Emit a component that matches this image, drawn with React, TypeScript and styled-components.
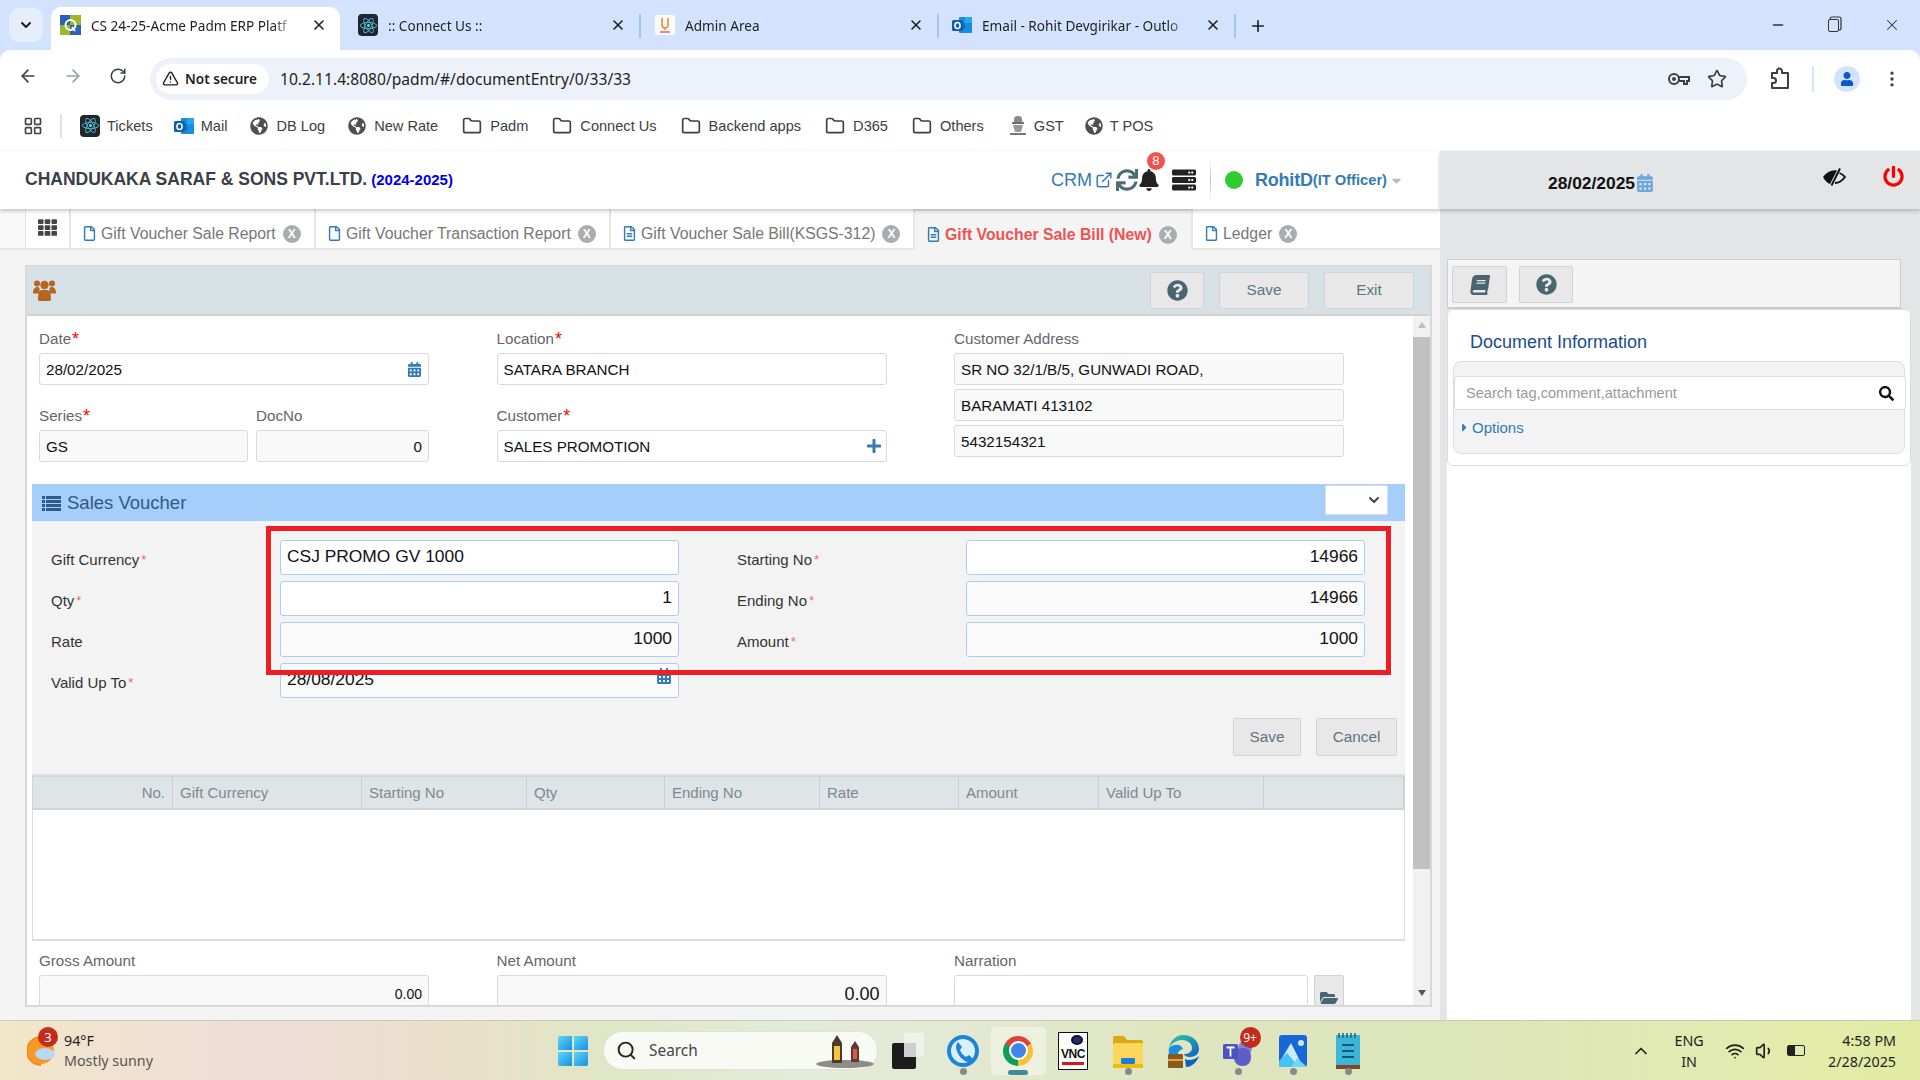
import styled, { createGlobalStyle } from "styled-components";
import {
  ArrowLeft,
  ArrowRight,
  ChevronDown,
  ChevronUp,
  ExternalLink,
  Folder,
  LayoutGrid,
  Minus,
  MoreVertical,
  Plus,
  RotateCw,
  Search,
  Star,
  TriangleAlert,
  Volume1,
  Wifi,
  X,
} from "lucide-react";
import {
  FaBell,
  FaBook,
  FaCalendarAlt,
  FaCaretDown,
  FaCaretRight,
  FaFolderOpen,
  FaGlobeAmericas,
  FaPlus,
  FaPowerOff,
  FaQuestionCircle,
  FaReact,
  FaRegFile,
  FaRegFileAlt,
  FaSearch,
  FaServer,
  FaSync,
  FaTh,
  FaUser,
} from "react-icons/fa";

const GlobalStyle = createGlobalStyle`
  html, body {
    margin: 0;
    padding: 0;
    background: #fff;
  }
  * {
    box-sizing: border-box;
  }
`;

const UI_FONT = `"Noto Sans", "Open Sans", sans-serif`;
const APP_FONT = `"Liberation Sans", Arial, sans-serif`;

const Page = styled.div`
  width: 1920px;
  height: 1080px;
  overflow: hidden;
  display: flex;
  flex-direction: column;
  font-family: ${APP_FONT};
  background: #fff;
`;

/* browser chrome */
const ChromeFrame = styled.div`
  background: #d3e3fd;
  font-family: ${UI_FONT};
  flex: none;
`;

const TabRow = styled.div`
  height: 50px;
  padding-left: 9px;
  display: flex;
  align-items: flex-end;
  color: #1f1f1f;
`;

const TabListButton = styled.div`
  width: 34px;
  height: 34px;
  margin: 0 8px 8px 0;
  border-radius: 10px;
  background: #e6eefc;
  display: flex;
  align-items: center;
  justify-content: center;
`;

const BrowserTab = styled.div<{ $active?: boolean; $width: number; $pad: number }>`
  position: relative;
  width: ${(p) => p.$width}px;
  height: 43px;
  padding: 0 0 7px ${(p) => p.$pad}px;
  display: flex;
  align-items: center;
  flex: none;
  background: ${(p) => (p.$active ? "#fff" : "transparent")};
  border-radius: 10px 10px 0 0;
  font-size: 13.6px;
`;

const TabDivider = styled.span`
  width: 2px;
  height: 24px;
  margin-bottom: 12px;
  background: #a8c2ea;
  flex: none;
`;

const TabTitle = styled.span`
  flex: 1;
  min-width: 0;
  margin-left: 10px;
  white-space: nowrap;
  mask-image: linear-gradient(90deg, #000 88%, transparent);
`;

const TabClose = styled.span`
  width: 42px;
  flex: none;
  display: flex;
  justify-content: center;
`;

const NewTab = styled.span`
  margin: 0 0 15px 13px;
  display: flex;
`;

const WindowControls = styled.div`
  margin-left: auto;
  height: 50px;
  display: flex;
  align-items: center;
`;

const WindowButton = styled.span`
  width: 57px;
  display: flex;
  justify-content: center;
  color: #333;
`;

const RestoreIcon = styled.span`
  width: 11px;
  height: 13px;
  margin-right: 3px;
  border: 1.4px solid #333;
  border-radius: 2px;
  box-shadow: 2px -2px 0 -0.6px #d3e3fd, 2px -2px 0 0.6px #333;
`;

const Toolbar = styled.div`
  height: 52px;
  padding-left: 5px;
  background: #fff;
  border-radius: 10px 10px 0 0;
  display: flex;
  align-items: center;
`;

const NavButton = styled.span<{ $muted?: boolean }>`
  width: 45px;
  display: flex;
  justify-content: center;
  color: ${(p) => (p.$muted ? "#9aa0a6" : "#3c4043")};
`;

const Omnibox = styled.div`
  width: 1597px;
  height: 42px;
  margin-left: 10px;
  margin-bottom: -6px;
  padding: 0 20px 0 6px;
  border-radius: 21px;
  background: #ecf1fa;
  display: flex;
  align-items: center;
`;

const SecurityChip = styled.div`
  width: 113px;
  height: 30px;
  border-radius: 15px;
  background: #fff;
  padding: 0 0 2px 6px;
  display: flex;
  align-items: center;
  gap: 6px;
  font-size: 13.6px;
  font-weight: 600;
  color: #1f1f1f;
  white-space: nowrap;
`;

const UrlText = styled.span`
  margin-left: 11px;
  font-size: 15.6px;
  color: #1f1f1f;
`;

const OmniIcons = styled.div`
  margin-left: auto;
  display: flex;
  align-items: center;
  gap: 16px;
  color: #3c4043;
`;

const ProfileArea = styled.div`
  flex: 1;
  height: 42px;
  margin-bottom: -6px;
  padding-left: 22px;
  display: flex;
  align-items: center;
  color: #3c4043;
`;

const ToolbarDivider = styled.span`
  width: 2px;
  height: 26px;
  margin: 0 20px 0 21px;
  background: #d3e3fd;
`;

const Avatar = styled.span`
  width: 26px;
  height: 26px;
  border-radius: 50%;
  background: #d3e3fd;
  color: #0b57d0;
  display: flex;
  align-items: center;
  justify-content: center;
`;

const ProfileMenu = styled.span`
  margin-left: 22px;
  display: flex;
`;

const BookmarkBar = styled.div`
  height: 49px;
  padding: 0 0 2px 23px;
  background: #fff;
  display: flex;
  align-items: center;
  gap: 21px;
  font-size: 14.6px;
  color: #3c4043;
`;

const AppsButton = styled.span`
  display: flex;
  color: #444;
`;

const BookmarkDivider = styled.span`
  width: 2px;
  height: 24px;
  margin: 0 -3px 0 -4px;
  background: #d3e3fd;
`;

const Bookmark = styled.span<{ $indent?: number; $gap?: number }>`
  margin-left: ${(p) => p.$indent ?? 0}px;
  display: flex;
  align-items: center;
  gap: ${(p) => p.$gap ?? 7}px;
  white-space: nowrap;
`;

const GlobeIcon = styled(FaGlobeAmericas)`
  color: #4f4f4f;
  font-size: 18px;
`;

const ReactTile = styled.span<{ $size: number }>`
  width: ${(p) => p.$size}px;
  height: ${(p) => p.$size + 2}px;
  border-radius: 4px;
  background: #20262b;
  color: #5ed3ee;
  display: flex;
  align-items: center;
  justify-content: center;
  flex: none;
  font-size: ${(p) => p.$size - 3}px;
`;

/* application */
const AppArea = styled.div`
  flex: 1;
  display: flex;
  min-height: 0;
`;

const MainColumn = styled.div`
  width: 1440px;
  display: flex;
  flex-direction: column;
`;

const AppHeader = styled.header`
  position: relative;
  z-index: 2;
  height: 58px;
  padding: 0 36px 0 25px;
  background: #fff;
  box-shadow: 0 2px 4px rgba(0, 0, 0, 0.22);
  display: flex;
  align-items: center;
`;

const CompanyName = styled.span`
  margin-top: -2px;
  font-size: 17.5px;
  font-weight: 700;
  color: #3a4048;
`;

const FiscalYear = styled.span`
  margin: -2px 0 0 4px;
  font-size: 15px;
  font-weight: 700;
  color: #0000ee;
`;

const HeaderTools = styled.div`
  margin-left: auto;
  display: flex;
  align-items: center;
  color: #337ab7;
`;

const CrmLink = styled.span`
  font-size: 18px;
  display: flex;
  align-items: center;
  gap: 3px;
`;

const SyncIcon = styled(FaSync)`
  margin-left: 3px;
  font-size: 22px;
  color: #4b6c75;
`;

const BellWrap = styled.span`
  position: relative;
  display: flex;
  margin: 0 12px 0 0;
  color: #222;
  font-size: 22px;
`;

const CountBadge = styled.span<{ $bg: string }>`
  position: absolute;
  top: -17px;
  right: -5px;
  min-width: 18px;
  height: 18px;
  border-radius: 9px;
  background: ${(p) => p.$bg};
  color: #fff;
  font-size: 13px;
  line-height: 18px;
  text-align: center;
`;

const MenuIcon = styled(FaServer)`
  color: #222;
  font-size: 24px;
`;

const HeaderDivider = styled.span`
  width: 1px;
  height: 40px;
  margin: 0 14px;
  background: linear-gradient(#fff, #bbb 50%, #fff);
`;

const StatusDot = styled.span`
  width: 18px;
  height: 18px;
  border-radius: 50%;
  background: #2ecc2e;
`;

const UserName = styled.span`
  margin-left: 12px;
  font-size: 18px;
  font-weight: 700;
  color: #337ab7;
  letter-spacing: -0.2px;
`;

const UserRole = styled.span`
  font-size: 14.7px;
  font-weight: 700;
  color: #337ab7;
`;

const RoleCaret = styled(FaCaretDown)`
  margin-left: 2px;
  color: #bbb;
  font-size: 15px;
`;

const DocTabs = styled.nav`
  height: 41px;
  padding-left: 25px;
  background: linear-gradient(90deg, #f8f8f8 25px, #fff 25px);
  border-bottom: 2px solid #e6e6e6;
  display: flex;
  font-size: 15.8px;
  color: #777;
`;

const AppsCell = styled.span`
  width: 44px;
  border-left: 1px solid #e6e6e6;
  padding: 9px 0 0 12px;
  color: #444;
  font-size: 19px;
  display: flex;
`;

const DocTab = styled.span<{ $active?: boolean; $width: number }>`
  width: ${(p) => p.$width}px;
  margin-bottom: ${(p) => (p.$active ? "-2px" : "0")};
  padding: ${(p) => (p.$active ? "8px" : "10px")} 0 0 11px;
  border-left: 2px solid #e6e6e6;
  border-top: ${(p) => (p.$active ? "2px solid #e6e6e6" : "none")};
  background: ${(p) => (p.$active ? "#f4f4f4" : "#fff")};
  color: ${(p) => (p.$active ? "#f05252" : "#777")};
  font-weight: ${(p) => (p.$active ? 700 : 400)};
  display: flex;
  align-items: center;
  gap: 4px;
  white-space: nowrap;
  flex: none;
`;

const DocIcon = styled.span`
  display: flex;
  color: #337ab7;
  font-size: 15px;
`;

const DocClose = styled.span`
  width: 18px;
  height: 18px;
  margin-left: 3px;
  border-radius: 50%;
  background: #a9adad;
  color: #fff;
  font-size: 12px;
  font-weight: 700;
  line-height: 18px;
  text-align: center;
`;

const Content = styled.main`
  flex: 1;
  min-height: 0;
  padding: 15px 8px 13px 25px;
  background: #f4f4f4;
`;

const Panel = styled.section`
  height: 100%;
  border: 2px solid #d8d8d8;
  border-top-width: 1px;
  background: #fff;
  display: flex;
  flex-direction: column;
  overflow: hidden;
`;

const PanelBar = styled.div`
  height: 50px;
  padding: 0 16px 0 6px;
  background: #d6e0e5;
  border-bottom: 2px solid #cfd4c8;
  display: flex;
  align-items: center;
  gap: 15px;
  flex: none;
`;

const BarTitleIcon = styled.svg`
  margin-right: auto;
`;

const GreyButton = styled.span<{ $width: number; $height?: number }>`
  width: ${(p) => p.$width}px;
  height: ${(p) => p.$height ?? 37}px;
  border: 1px solid #d2d2d2;
  border-radius: 2px;
  background: #e8e8e8;
  color: #5f7480;
  font-size: 15.3px;
  display: flex;
  align-items: center;
  justify-content: center;
  flex: none;
`;

const HelpIcon = styled(FaQuestionCircle)`
  color: #4a6572;
  font-size: 21px;
`;

const PanelBody = styled.div`
  flex: 1;
  min-height: 0;
  display: flex;
`;

const ScrollArea = styled.div`
  flex: 1;
  min-width: 0;
  overflow: hidden;
`;

const FieldGrid = styled.div<{ $height?: number; $top?: number }>`
  height: ${(p) => (p.$height ? `${p.$height}px` : "auto")};
  padding: ${(p) => p.$top ?? 0}px 0 0 12px;
  display: grid;
  grid-template-columns: 390px 390px 390px;
  column-gap: 67.5px;
`;

const FieldColumn = styled.div`
  display: flex;
  flex-direction: column;
`;

const FieldLabel = styled.label`
  height: 24px;
  padding-bottom: 5px;
  display: flex;
  align-items: center;
  font-size: 15.2px;
  color: #666;
`;

const Required = styled.sup`
  margin-left: 1px;
  color: #f00;
  font-size: 18px;
  line-height: 10px;
`;

const TextBox = styled.div<{ $readOnly?: boolean; $right?: boolean; $height?: number }>`
  height: ${(p) => p.$height ?? 32}px;
  padding: 0 6px;
  border: 1px solid #d9d9d9;
  border-radius: 3px;
  background: ${(p) => (p.$readOnly ? "#f9f9f9" : "#fff")};
  color: #111;
  font-size: 15.2px;
  display: flex;
  align-items: center;
  justify-content: ${(p) => (p.$right ? "flex-end" : "space-between")};
  white-space: nowrap;
`;

const FieldPair = styled.div`
  display: grid;
  grid-template-columns: 209px 173px;
  column-gap: 8px;
`;

const AddressStack = styled.div`
  display: flex;
  flex-direction: column;
  gap: 4px;
`;

const SpacedColumn = styled(FieldColumn)`
  gap: 21px;
`;

const CalendarIcon = styled(FaCalendarAlt)`
  color: #337ab7;
  font-size: 15px;
`;

const ValidCalendar = styled(CalendarIcon)`
  margin-top: -7px;
  font-size: 16px;
`;

const PlusIcon = styled(FaPlus)`
  margin-right: -2px;
  color: #337ab7;
  font-size: 16px;
`;

const SectionBar = styled.div`
  height: 37px;
  margin: 0 8px 0 5px;
  padding: 1px 10px 0;
  background: #a5cefb;
  color: #2c5b8a;
  display: flex;
  align-items: center;
  gap: 6px;
  font-size: 18.5px;
`;

const SectionSelect = styled.span`
  width: 63px;
  height: 30px;
  margin: -6px 7px 0 auto;
  background: #fff;
  border: 1px solid #dde;
  border-radius: 2px;
  padding-right: 5px;
  color: #444;
  display: flex;
  align-items: center;
  justify-content: flex-end;
`;

const VoucherSection = styled.div`
  position: relative;
  height: 255px;
  margin: 0 8px 0 5px;
  padding: 19px 8px 0 19px;
  background: #f3f3f3;
  border-bottom: 2px solid #e0e0e0;
`;

const VoucherGrid = styled.div`
  display: grid;
  grid-template-columns: 229px 399px 229px 399px;
  grid-auto-rows: 35px;
  row-gap: 6px;
  column-gap: 0;
`;

const VoucherLabel = styled.span<{ $second?: boolean }>`
  margin-left: ${(p) => (p.$second ? "58px" : "0")};
  margin-right: ${(p) => (p.$second ? "-58px" : "0")};
  padding-top: 4px;
  display: flex;
  align-items: center;
  font-size: 15px;
  color: #333;
`;

const RedStar = styled.span`
  margin-left: 2px;
  color: #f06a6a;
  font-size: 13px;
`;

const VoucherBox = styled.div<{ $readOnly?: boolean; $right?: boolean }>`
  padding: 0 6px 3px;
  border: 1.5px solid #a9cdf7;
  border-radius: 3px;
  background: ${(p) => (p.$readOnly ? "#fafafa" : "#fff")};
  color: #111;
  font-size: 17.4px;
  display: flex;
  align-items: center;
  justify-content: ${(p) => (p.$right ? "flex-end" : "space-between")};
`;

const VoucherSecond = styled(VoucherBox)`
  margin-left: 58px;
  margin-right: -58px;
`;

const VoucherSpacer = styled.span`
  grid-column: span 2;
`;

const VoucherActions = styled.div`
  margin-top: 20px;
  display: flex;
  justify-content: flex-end;
  gap: 15px;
`;

const Highlight = styled.div`
  position: absolute;
  top: 5px;
  left: 234px;
  width: 1125px;
  height: 149px;
  border: 5px solid #ee1c25;
  pointer-events: none;
`;

const TableHead = styled.div`
  height: 34px;
  margin: 0 8px 0 5px;
  display: grid;
  grid-template-columns: 140px 189px 165px 138px 155px 139px 140px 165px 1fr;
  background: #dfe4e6;
  border: 1px solid #cfd4d6;
  border-bottom-width: 2px;
  font-size: 15px;
  color: #7a8a92;
`;

const HeadCell = styled.span<{ $right?: boolean }>`
  padding: 0 7px;
  border-right: 1px solid #c9cfd2;
  display: flex;
  align-items: center;
  justify-content: ${(p) => (p.$right ? "flex-end" : "flex-start")};
`;

const TableBody = styled.div`
  height: 131px;
  margin: 0 8px 10px 5px;
  border: 1px solid #ddd;
  border-top: none;
  border-bottom-width: 2px;
`;

const NarrationRow = styled.div`
  display: flex;
  gap: 6px;
`;

const NarrationBox = styled(TextBox)`
  width: 355px;
`;

const UploadButton = styled(GreyButton)`
  padding-top: 14px;
  font-size: 18px;
  color: #4a6572;
`;

const SmallAmount = styled.span`
  font-size: 14px;
  padding-top: 6px;
`;

const LargeAmount = styled.span`
  font-size: 18px;
  padding-top: 6px;
`;

const Scrollbar = styled.div`
  width: 17px;
  flex: none;
  background: #f1f1f1;
  display: flex;
  flex-direction: column;
  align-items: center;
  padding: 6px 0 9px;
`;

const ScrollArrow = styled.span<{ $down?: boolean }>`
  width: 0;
  height: 0;
  border-left: 4.5px solid transparent;
  border-right: 4.5px solid transparent;
  border-bottom: ${(p) => (p.$down ? "none" : "6px solid #bbb")};
  border-top: ${(p) => (p.$down ? "6px solid #555" : "none")};
  flex: none;
`;

const ScrollThumb = styled.span`
  width: 100%;
  height: 532px;
  margin: 9px 0 auto;
  background: #c1c1c1;
`;

/* right side */
const SideColumn = styled.aside`
  width: 480px;
  background: #e4e5e7;
  display: flex;
  flex-direction: column;
`;

const DateBar = styled.div`
  position: relative;
  z-index: 2;
  height: 58px;
  padding: 0 16px 0 108px;
  background: #e4e5e7;
  box-shadow: 0 2px 4px rgba(0, 0, 0, 0.22);
  display: flex;
  align-items: center;
`;

const DateValue = styled.span`
  margin-top: 6px;
  font-size: 17.4px;
  font-weight: 700;
  color: #111;
  display: flex;
  align-items: center;
  gap: 1px;
`;

const DateCalendar = styled(FaCalendarAlt)`
  color: #6ea6d8;
  font-size: 18px;
`;

const EyeGlyph = styled.svg`
  margin: -6px 37px 0 auto;
`;

const PowerIcon = styled(FaPowerOff)`
  margin-top: -8px;
  font-size: 21px;
  color: #f00;
`;

const SideBody = styled.div`
  flex: 1;
  min-height: 0;
  padding: 50px 9px 0 7px;
  display: flex;
  flex-direction: column;
`;

const SideBar = styled.div`
  width: 454px;
  height: 50px;
  padding: 6px 4px;
  border: 1px solid #ccc;
  border-bottom-width: 2px;
  background: #f4f4f4;
  display: flex;
  gap: 12px;
  flex: none;
`;

const BookIcon = styled(FaBook)`
  color: #4a6572;
  font-size: 20px;
  transform: skewX(-8deg);
`;

const InfoPanel = styled.div`
  flex: 1;
  background: #fff;
  border-radius: 6px 6px 0 0;
`;

const InfoCard = styled.div`
  height: 157px;
  padding: 0 5px;
  border: 1px solid #dcdcdc;
  border-radius: 6px;
`;

const InfoTitle = styled.h2`
  height: 51px;
  margin: 0;
  padding: 13px 0 0 17px;
  display: flex;
  align-items: center;
  font-size: 18px;
  font-weight: 400;
  color: #1b4b91;
`;

const InnerCard = styled.div`
  height: 93px;
  padding-top: 14px;
  background: #f3f3f3;
  border: 1px solid #ddd;
  border-radius: 8px;
`;

const SearchBox = styled.div`
  height: 34px;
  margin-right: -2px;
  padding: 0 11px 0 11px;
  background: #fff;
  border: 1px solid #ddd;
  border-radius: 4px;
  display: flex;
  align-items: center;
  justify-content: space-between;
  font-size: 14.6px;
  color: #999;
`;

const SearchGlyph = styled(FaSearch)`
  color: #111;
  font-size: 15px;
`;

const OptionsRow = styled.div`
  margin: 9px 0 0 4px;
  display: flex;
  align-items: center;
  gap: 1px;
  color: #337ab7;
  font-size: 15px;
`;

/* windows taskbar */
const Taskbar = styled.footer`
  height: 60px;
  flex: none;
  display: flex;
  align-items: center;
  font-family: ${UI_FONT};
  border-top: 1px solid #c9c9b8;
  background: linear-gradient(
    90deg,
    #f1e7c9 0,
    #efdcd8 14%,
    #e9e0c8 24%,
    #dfe7c6 32%,
    #e3ecd9 42%,
    #e3e9d2 50%,
    #dfe6c0 60%,
    #dde5bb 75%,
    #e2ebb0 90%,
    #e2eba2 100%
  );
`;

const WeatherArea = styled.div`
  width: 558px;
  padding-left: 27px;
  display: flex;
  align-items: center;
  gap: 9px;
  flex: none;
`;

const WeatherGlyph = styled.span`
  position: relative;
  width: 28px;
  height: 30px;
  display: flex;
`;

const WeatherBadge = styled.span`
  position: absolute;
  top: -9px;
  right: -3px;
  width: 20px;
  height: 20px;
  border-radius: 50%;
  background: #c42b1c;
  color: #fff;
  font-size: 13px;
  line-height: 20px;
  text-align: center;
`;

const WeatherText = styled.div`
  font-size: 14.3px;
  line-height: 20px;
  color: #1f1f1f;
`;

const WeatherNote = styled.div`
  color: #555;
`;

const SearchPill = styled.div`
  width: 275px;
  height: 39px;
  margin-left: 15px;
  padding: 0 2px 0 12px;
  border-radius: 20px;
  background: #fafaf4;
  border: 1px solid #dfe2d8;
  display: flex;
  align-items: center;
  gap: 12px;
  font-size: 15.4px;
  color: #444;
  flex: none;
`;

const PillArt = styled.svg`
  margin-left: auto;
`;

const TaskSlots = styled.div`
  margin-left: 2.5px;
  display: flex;
`;

const TaskSlot = styled.div<{ $active?: boolean; $open?: boolean }>`
  position: relative;
  width: 55px;
  height: 48px;
  display: flex;
  align-items: center;
  justify-content: center;
  border-radius: 5px;
  background: ${(p) => (p.$active ? "#eef1e0" : "transparent")};

  &::after {
    content: "";
    display: ${(p) => (p.$open || p.$active ? "block" : "none")};
    position: absolute;
    bottom: 0;
    left: 50%;
    width: ${(p) => (p.$active ? "20px" : "7px")};
    height: ${(p) => (p.$active ? "5px" : "7px")};
    margin-left: ${(p) => (p.$active ? "-10px" : "-3.5px")};
    border-radius: 4px;
    background: ${(p) => (p.$active ? "#3f8c9c" : "#888")};
  }
`;

const ChromeLogo = styled.span`
  position: relative;
  width: 30px;
  height: 30px;
  border-radius: 50%;
  background: conic-gradient(
    #db4437 0 60deg,
    #fbc02d 60deg 180deg,
    #0f9d58 180deg 300deg,
    #db4437 300deg
  );

  &::after {
    content: "";
    position: absolute;
    inset: 8px;
    border-radius: 50%;
    background: #3f87e8;
    border: 2.5px solid #fff;
    box-sizing: content-box;
    margin: -2.5px;
  }
`;

const VncTile = styled.span`
  width: 30px;
  height: 38px;
  border: 1px solid #111;
  background: #fff;
  color: #111;
  font-family: ${APP_FONT};
  font-size: 12px;
  font-weight: 700;
  letter-spacing: -0.5px;
  display: flex;
  flex-direction: column;
  align-items: center;
  justify-content: flex-end;
  line-height: 13px;
`;

const VncEye = styled.span`
  width: 12px;
  height: 10px;
  margin: 0 0 3px 8px;
  border-radius: 50%;
  background: #1b2f7a;
  border: 2px solid #111;
`;

const VncStripe = styled.span`
  width: 22px;
  height: 3px;
  margin: 1px 0 4px;
  background: #e3131b;
`;

const TeamsBadge = styled.span`
  position: absolute;
  top: 0;
  right: 5px;
  width: 21px;
  height: 21px;
  border-radius: 50%;
  background: #c42b1c;
  color: #fff;
  font-size: 12px;
  line-height: 21px;
  text-align: center;
`;

const Tray = styled.div`
  margin-left: auto;
  padding-right: 24px;
  display: flex;
  align-items: center;
  font-size: 14.3px;
  color: #1f1f1f;
`;

const TrayLang = styled.div`
  width: 40px;
  margin: 0 16px 0 18px;
  line-height: 21px;
  text-align: center;
`;

const TrayIcons = styled.div`
  display: flex;
  align-items: center;
  gap: 10px;
  margin-right: 23px;
`;

const BatteryIcon = styled.span`
  position: relative;
  width: 18px;
  height: 11px;
  margin-left: 2px;
  border: 1.5px solid #222;
  border-radius: 2px;
  background: linear-gradient(90deg, #222 45%, transparent 45%);
`;

const Clock = styled.div`
  line-height: 21px;
  text-align: right;
`;

const AcmeFavicon = () => (
  <svg width="21" height="20" viewBox="0 0 21 20">
    <rect width="21" height="20" fill="#2b62b5" />
    <rect x="10" y="0" width="11" height="10" fill="#9db82d" />
    <rect x="0" y="10" width="10" height="10" fill="#9db82d" />
    <circle cx="10.5" cy="10" r="5" fill="none" stroke="#fff" strokeWidth="2" />
    <path d="M12 12l3 4" stroke="#fff" strokeWidth="2" />
  </svg>
);

const AdminFavicon = () => (
  <svg width="20" height="20" viewBox="0 0 20 20">
    <rect width="20" height="20" rx="2" fill="#fbfbfb" />
    <path d="M7 3v7a3 3 0 0 0 3 3M13 3v7a3 3 0 0 1-3 3v2" fill="none" stroke="#ee8a2c" strokeWidth="1.6" />
    <path d="M5 17h10" stroke="#e55" strokeWidth="1.4" />
  </svg>
);

const OutlookIcon = ({ size = 20 }: { size?: number }) => (
  <svg width={size} height={size} viewBox="0 0 20 20">
    <rect x="7" y="2" width="13" height="16" rx="1" fill="#1490df" />
    <rect x="13" y="2" width="7" height="6" fill="#28a8ea" />
    <rect x="7" y="8" width="6" height="6" fill="#0a6fc2" />
    <rect x="0" y="5" width="11" height="11" rx="1.5" fill="#0f5eb0" />
    <ellipse cx="5.5" cy="10.5" rx="2.6" ry="3" fill="none" stroke="#fff" strokeWidth="1.5" />
  </svg>
);

const KeyGlyph = () => (
  <svg width="24" height="16" viewBox="0 0 24 16" fill="none" stroke="currentColor" strokeWidth="2">
    <circle cx="7" cy="8" r="5" />
    <circle cx="7" cy="8" r="1" />
    <path d="M12 6h10v4h-2v3h-3v-3h-5" />
  </svg>
);

const ExtensionGlyph = () => (
  <svg width="22" height="24" viewBox="0 0 22 24" fill="none" stroke="currentColor" strokeWidth="2" strokeLinejoin="round">
    <path d="M3 6h5V4a2.5 2.5 0 0 1 5 0v2h6v15H3v-5h1.5a2.5 2.5 0 0 0 0-5H3z" />
  </svg>
);

const EmblemIcon = () => (
  <svg width="18" height="22" viewBox="0 0 18 22">
    <path d="M5 4a4 3 0 0 1 8 0v3H5z" fill="#8a8a8a" />
    <rect x="3" y="7" width="12" height="2" fill="#6f6f6f" />
    <path d="M4 10h10l-2 7H6z" fill="#9a9a9a" />
    <rect x="1" y="18" width="16" height="2" fill="#777" />
  </svg>
);

const UsersGlyph = () => (
  <BarTitleIcon width="23" height="22" viewBox="0 0 23 22" fill="#b5651d">
    <circle cx="11.5" cy="6" r="4.2" />
    <circle cx="4" cy="4.5" r="3" />
    <circle cx="19" cy="4.5" r="3" />
    <path d="M0 14c0-4 2-6 5-6l1.5 1v5.5H1a1 1 0 0 1-1-.5z" />
    <path d="M23 14c0-4-2-6-5-6l-1.5 1v5.5H22a1 1 0 0 0 1-.5z" />
    <path d="M5 20c0-6 1.500-9 4-9h5c2.500 0 4 3 4 9 0 1.500-1 2-2 2H7c-1 0-2-.5-2-2z" />
  </BarTitleIcon>
);

const ListGlyph = () => (
  <svg width="19" height="15" viewBox="0 0 19 15" fill="currentColor">
    <rect width="3" height="3" />
    <rect x="4" width="15" height="3" />
    <rect y="4" width="3" height="3" />
    <rect x="4" y="4" width="15" height="3" />
    <rect y="8" width="3" height="3" />
    <rect x="4" y="8" width="15" height="3" />
    <rect y="12" width="3" height="3" />
    <rect x="4" y="12" width="15" height="3" />
  </svg>
);

const EyeSlash = () => (
  <EyeGlyph width="24" height="18" viewBox="0 0 24 18">
    <path d="M1 9C5 3.500 10 1.500 15 2.500L8 16C5 15 3 12.500 1 9z" fill="#111" />
    <path d="M18 .5L9.500 17.500" stroke="#111" strokeWidth="2" />
    <path d="M17.500 5c2.500 1 4.500 2.500 5.500 4-2.500 3.500-5.500 6-10 6" fill="none" stroke="#111" strokeWidth="1.800" />
  </EyeGlyph>
);

const WindowsLogo = () => (
  <svg width="30" height="30" viewBox="0 0 30 30">
    <defs>
      <linearGradient id="winA" x1="0" y1="0" x2="1" y2="1">
        <stop offset="0" stopColor="#5ed6fb" />
        <stop offset="1" stopColor="#1a8fe0" />
      </linearGradient>
    </defs>
    <path d="M2 0h12v14H0V2a2 2 0 0 1 2-2z" fill="url(#winA)" />
    <path d="M16 0h12a2 2 0 0 1 2 2v12H16z" fill="url(#winA)" />
    <path d="M0 16h14v14H2a2 2 0 0 1-2-2z" fill="url(#winA)" />
    <path d="M16 16h14v12a2 2 0 0 1-2 2H16z" fill="url(#winA)" />
  </svg>
);

const Lanterns = () => (
  <PillArt width="60" height="36" viewBox="0 0 60 36">
    <ellipse cx="30" cy="31" rx="29" ry="4" fill="#8d8d86" />
    <path d="M17 10l5-8 5 8v20H17z" fill="#4b3b2e" />
    <rect x="19" y="13" width="6" height="14" fill="#f5c542" />
    <path d="M36 14l4-6 4 6v15h-8z" fill="#5b3a33" />
    <rect x="38" y="16" width="4" height="10" fill="#e2574c" />
  </PillArt>
);

const TaskViewIcon = () => (
  <svg width="32" height="36" viewBox="0 0 32 36">
    <rect x="12" y="0" width="20" height="24" rx="1" fill="#f2f2ef" opacity="0.85" />
    <rect x="0" y="10" width="24" height="26" rx="2" fill="#1c1c1c" />
    <rect x="12" y="10" width="12" height="14" fill="#cfcfcf" />
  </svg>
);

const PhoneIcon = () => (
  <svg width="32" height="36" viewBox="0 0 32 36">
    <circle cx="16" cy="18" r="16" fill="#1b86d9" />
    <circle cx="16" cy="18" r="12" fill="#dbeefc" />
    <path d="M11 9l4 5-2 3c1 3 3 5 6 7l3-2 4 4c-2 3-5 4-8 2-5-3-8-8-9-13 0-3 1-5 2-6z" fill="#1b86d9" />
  </svg>
);

const FolderIcon = () => (
  <svg width="30" height="34" viewBox="0 0 30 34">
    <path d="M0 4a2 2 0 0 1 2-2h9l3 4h14a2 2 0 0 1 2 2v4H0z" fill="#e0a613" />
    <rect y="9" width="30" height="25" rx="2" fill="#fbd75b" />
    <rect x="8" y="24" width="14" height="6" rx="1" fill="#1a7fd6" />
    <rect y="30" width="30" height="4" fill="#f2b90f" />
  </svg>
);

const EdgeIcon = () => (
  <svg width="32" height="34" viewBox="0 0 32 34">
    <defs>
      <linearGradient id="edgeA" x1="0" y1="0" x2="1" y2="1">
        <stop offset="0" stopColor="#36c7a5" />
        <stop offset="1" stopColor="#0b62c4" />
      </linearGradient>
    </defs>
    <path d="M16 1c9 0 16 6 16 14 0 5-4 8-9 8-3 0-6-1-6-3 4 0 8-2 8-6 0-5-5-8-10-8C9 6 4 10 2 14 3 7 9 1 16 1z" fill="url(#edgeA)" />
    <path d="M2 14c3-4 12-5 14 1-4 1-7 5-5 10 1 3 3 5 5 6C8 31 0 24 2 14z" fill="#1b8fdf" />
    <path d="M32 22c-2 6-7 11-13 11l-1-8c4 2 10 1 14-3z" fill="#0b62c4" />
    <rect x="1" y="20" width="15" height="14" rx="1" fill="#8a5a1c" />
    <rect x="1" y="25" width="15" height="2" fill="#e0a44a" />
  </svg>
);

const TeamsIcon = () => (
  <svg width="30" height="30" viewBox="0 0 30 30">
    <circle cx="22" cy="12" r="7" fill="#7b83eb" />
    <rect x="11" y="12" width="17" height="18" rx="8" fill="#5b5fc7" />
    <rect x="0" y="8" width="15" height="15" rx="1.5" fill="#4b53bc" />
    <path d="M3.5 11.5h8M7.5 11.5v9" stroke="#fff" strokeWidth="1.8" />
  </svg>
);

const PhotosIcon = () => (
  <svg width="28" height="32" viewBox="0 0 28 32">
    <rect width="28" height="32" rx="3" fill="#1668d6" />
    <circle cx="22" cy="8" r="3" fill="#cfe6ff" />
    <path d="M0 28L12 8l10 20z" fill="#cdeafe" />
    <path d="M0 32v-6l8-8 12 14z" fill="#45c3f5" />
    <path d="M12 32l6-9 10 9z" fill="#6fd6f7" />
  </svg>
);

const NotepadIcon = () => (
  <svg width="24" height="36" viewBox="0 0 24 36">
    <rect y="2" width="24" height="31" fill="#3db5d8" />
    <rect y="32" width="24" height="4" fill="#7a4a22" />
    <path d="M3 0v5M7 0v5M11 0v5M15 0v5M19 0v5" stroke="#1f6f8b" strokeWidth="1.6" />
    <path d="M6 12h12M6 18h12M6 24h12" stroke="#0e5a78" strokeWidth="2" />
  </svg>
);

const WeatherIcon = () => (
  <svg width="28" height="30" viewBox="0 0 28 30">
    <path d="M14 0a15 15 0 0 0 0 30z" fill="#f28c1e" />
    <circle cx="14" cy="15" r="13" fill="#f59b23" />
    <ellipse cx="18" cy="18" rx="10" ry="6" fill="#b9d8f4" />
  </svg>
);

const docTabs = [
  { title: "Gift Voucher Sale Report", width: 245, icon: <FaRegFile /> },
  { title: "Gift Voucher Transaction Report", width: 295, icon: <FaRegFile /> },
  { title: "Gift Voucher Sale Bill(KSGS-312)", width: 304, icon: <FaRegFileAlt /> },
  { title: "Gift Voucher Sale Bill (New)", width: 278, icon: <FaRegFileAlt />, active: true },
  { title: "Ledger", width: 249, icon: <FaRegFile /> },
];

const folders = ["Padm", "Connect Us", "Backend apps", "D365", "Others"];

const tableColumns = ["Gift Currency", "Starting No", "Qty", "Ending No", "Rate", "Amount", "Valid Up To", ""];

export default function App() {
  return (
    <Page>
      <GlobalStyle />
      <ChromeFrame>
        <TabRow>
          <TabListButton>
            <ChevronDown size={16} strokeWidth={3} />
          </TabListButton>
          <BrowserTab $active $width={289} $pad={9}>
            <AcmeFavicon />
            <TabTitle>CS 24-25-Acme Padm ERP Platf</TabTitle>
            <TabClose>
              <X size={16} strokeWidth={2.4} />
            </TabClose>
          </BrowserTab>
          <BrowserTab $width={299} $pad={18}>
            <ReactTile $size={20}>
              <FaReact />
            </ReactTile>
            <TabTitle>:: Connect Us ::</TabTitle>
            <TabClose>
              <X size={16} strokeWidth={2.4} />
            </TabClose>
          </BrowserTab>
          <TabDivider />
          <BrowserTab $width={296} $pad={14}>
            <AdminFavicon />
            <TabTitle>Admin Area</TabTitle>
            <TabClose>
              <X size={16} strokeWidth={2.4} />
            </TabClose>
          </BrowserTab>
          <TabDivider />
          <BrowserTab $width={295} $pad={13}>
            <OutlookIcon />
            <TabTitle>Email - Rohit Devgirikar - Outlo</TabTitle>
            <TabClose>
              <X size={16} strokeWidth={2.4} />
            </TabClose>
          </BrowserTab>
          <TabDivider />
          <NewTab>
            <Plus size={18} strokeWidth={2.2} />
          </NewTab>
          <WindowControls>
            <WindowButton>
              <Minus size={16} />
            </WindowButton>
            <WindowButton>
              <RestoreIcon />
            </WindowButton>
            <WindowButton>
              <X size={18} strokeWidth={1.4} />
            </WindowButton>
          </WindowControls>
        </TabRow>
        <Toolbar>
          <NavButton>
            <ArrowLeft size={20} />
          </NavButton>
          <NavButton $muted>
            <ArrowRight size={20} />
          </NavButton>
          <NavButton>
            <RotateCw size={18} />
          </NavButton>
          <Omnibox>
            <SecurityChip>
              <TriangleAlert size={17} />
              Not secure
            </SecurityChip>
            <UrlText>10.2.11.4:8080/padm/#/documentEntry/0/33/33</UrlText>
            <OmniIcons>
              <KeyGlyph />
              <Star size={20} />
            </OmniIcons>
          </Omnibox>
          <ProfileArea>
            <ExtensionGlyph />
            <ToolbarDivider />
            <Avatar>
              <FaUser size={14} />
            </Avatar>
            <ProfileMenu>
              <MoreVertical size={20} />
            </ProfileMenu>
          </ProfileArea>
        </Toolbar>
      </ChromeFrame>
      <BookmarkBar>
        <AppsButton>
          <LayoutGrid size={20} />
        </AppsButton>
        <BookmarkDivider />
        <Bookmark>
          <ReactTile $size={20}>
            <FaReact />
          </ReactTile>
          Tickets
        </Bookmark>
        <Bookmark>
          <OutlookIcon />
          Mail
        </Bookmark>
        <Bookmark $indent={2} $gap={8}>
          <GlobeIcon />
          DB Log
        </Bookmark>
        <Bookmark $indent={2} $gap={8}>
          <GlobeIcon />
          New Rate
        </Bookmark>
        {folders.map((name) => (
          <Bookmark key={name} $indent={3} $gap={8}>
            <Folder size={20} />
            {name}
          </Bookmark>
        ))}
        <Bookmark $indent={4}>
          <EmblemIcon />
          GST
        </Bookmark>
        <Bookmark>
          <GlobeIcon />
          T POS
        </Bookmark>
      </BookmarkBar>

      <AppArea>
        <MainColumn>
          <AppHeader>
            <CompanyName>CHANDUKAKA SARAF &amp; SONS PVT.LTD.</CompanyName>
            <FiscalYear>(2024-2025)</FiscalYear>
            <HeaderTools>
              <CrmLink>
                CRM
                <ExternalLink size={18} />
              </CrmLink>
              <SyncIcon />
              <BellWrap>
                <FaBell />
                <CountBadge $bg="#ef5350">8</CountBadge>
              </BellWrap>
              <MenuIcon />
              <HeaderDivider />
              <StatusDot />
              <UserName>RohitD</UserName>
              <UserRole>(IT Officer)</UserRole>
              <RoleCaret />
            </HeaderTools>
          </AppHeader>
          <DocTabs>
            <AppsCell>
              <FaTh />
            </AppsCell>
            {docTabs.map((tab) => (
              <DocTab key={tab.title} $width={tab.width} $active={tab.active}>
                <DocIcon>{tab.icon}</DocIcon>
                {tab.title}
                <DocClose>X</DocClose>
              </DocTab>
            ))}
          </DocTabs>
          <Content>
            <Panel>
              <PanelBar>
                <UsersGlyph />
                <GreyButton $width={54}>
                  <HelpIcon />
                </GreyButton>
                <GreyButton $width={90}>Save</GreyButton>
                <GreyButton $width={90}>Exit</GreyButton>
              </PanelBar>
              <PanelBody>
                <ScrollArea>
                  <FieldGrid $height={168} $top={13}>
                    <SpacedColumn>
                      <div>
                        <FieldLabel>
                          Date<Required>*</Required>
                        </FieldLabel>
                        <TextBox>
                          28/02/2025
                          <CalendarIcon />
                        </TextBox>
                      </div>
                      <FieldPair>
                        <div>
                          <FieldLabel>
                            Series<Required>*</Required>
                          </FieldLabel>
                          <TextBox $readOnly>GS</TextBox>
                        </div>
                        <div>
                          <FieldLabel>DocNo</FieldLabel>
                          <TextBox $readOnly $right>
                            0
                          </TextBox>
                        </div>
                      </FieldPair>
                    </SpacedColumn>
                    <SpacedColumn>
                      <div>
                        <FieldLabel>
                          Location<Required>*</Required>
                        </FieldLabel>
                        <TextBox>SATARA BRANCH</TextBox>
                      </div>
                      <div>
                        <FieldLabel>
                          Customer<Required>*</Required>
                        </FieldLabel>
                        <TextBox>
                          SALES PROMOTION
                          <PlusIcon />
                        </TextBox>
                      </div>
                    </SpacedColumn>
                    <FieldColumn>
                      <FieldLabel>Customer Address</FieldLabel>
                      <AddressStack>
                        <TextBox $readOnly>SR NO 32/1/B/5, GUNWADI ROAD,</TextBox>
                        <TextBox $readOnly>BARAMATI 413102</TextBox>
                        <TextBox $readOnly>5432154321</TextBox>
                      </AddressStack>
                    </FieldColumn>
                  </FieldGrid>

                  <SectionBar>
                    <ListGlyph />
                    Sales Voucher
                    <SectionSelect>
                      <ChevronDown size={16} strokeWidth={3} />
                    </SectionSelect>
                  </SectionBar>
                  <VoucherSection>
                    <VoucherGrid>
                      <VoucherLabel>
                        Gift Currency<RedStar>*</RedStar>
                      </VoucherLabel>
                      <VoucherBox>CSJ PROMO GV 1000</VoucherBox>
                      <VoucherLabel $second>
                        Starting No<RedStar>*</RedStar>
                      </VoucherLabel>
                      <VoucherSecond $right>14966</VoucherSecond>
                      <VoucherLabel>
                        Qty<RedStar>*</RedStar>
                      </VoucherLabel>
                      <VoucherBox $right>1</VoucherBox>
                      <VoucherLabel $second>
                        Ending No<RedStar>*</RedStar>
                      </VoucherLabel>
                      <VoucherSecond $readOnly $right>
                        14966
                      </VoucherSecond>
                      <VoucherLabel>Rate</VoucherLabel>
                      <VoucherBox $readOnly $right>
                        1000
                      </VoucherBox>
                      <VoucherLabel $second>
                        Amount<RedStar>*</RedStar>
                      </VoucherLabel>
                      <VoucherSecond $readOnly $right>
                        1000
                      </VoucherSecond>
                      <VoucherLabel>
                        Valid Up To<RedStar>*</RedStar>
                      </VoucherLabel>
                      <VoucherBox $readOnly>
                        28/08/2025
                        <ValidCalendar />
                      </VoucherBox>
                      <VoucherSpacer />
                    </VoucherGrid>
                    <VoucherActions>
                      <GreyButton $width={68} $height={38}>
                        Save
                      </GreyButton>
                      <GreyButton $width={81} $height={38}>
                        Cancel
                      </GreyButton>
                    </VoucherActions>
                    <Highlight />
                  </VoucherSection>

                  <TableHead>
                    <HeadCell $right>No.</HeadCell>
                    {tableColumns.map((col) => (
                      <HeadCell key={col}>{col}</HeadCell>
                    ))}
                  </TableHead>
                  <TableBody />

                  <FieldGrid>
                    <FieldColumn>
                      <FieldLabel>Gross Amount</FieldLabel>
                      <TextBox $readOnly $right>
                        <SmallAmount>0.00</SmallAmount>
                      </TextBox>
                    </FieldColumn>
                    <FieldColumn>
                      <FieldLabel>Net Amount</FieldLabel>
                      <TextBox $readOnly $right>
                        <LargeAmount>0.00</LargeAmount>
                      </TextBox>
                    </FieldColumn>
                    <FieldColumn>
                      <FieldLabel>Narration</FieldLabel>
                      <NarrationRow>
                        <NarrationBox />
                        <UploadButton $width={30} $height={32}>
                          <FaFolderOpen />
                        </UploadButton>
                      </NarrationRow>
                    </FieldColumn>
                  </FieldGrid>
                </ScrollArea>
                <Scrollbar>
                  <ScrollArrow />
                  <ScrollThumb />
                  <ScrollArrow $down />
                </Scrollbar>
              </PanelBody>
            </Panel>
          </Content>
        </MainColumn>

        <SideColumn>
          <DateBar>
            <DateValue>
              28/02/2025
              <DateCalendar />
            </DateValue>
            <EyeSlash />
            <PowerIcon />
          </DateBar>
          <SideBody>
            <SideBar>
              <GreyButton $width={55}>
                <BookIcon />
              </GreyButton>
              <GreyButton $width={54}>
                <HelpIcon />
              </GreyButton>
            </SideBar>
            <InfoPanel>
              <InfoCard>
                <InfoTitle>Document Information</InfoTitle>
                <InnerCard>
                  <SearchBox>
                    Search tag,comment,attachment
                    <SearchGlyph />
                  </SearchBox>
                  <OptionsRow>
                    <FaCaretRight size={13} />
                    Options
                  </OptionsRow>
                </InnerCard>
              </InfoCard>
            </InfoPanel>
          </SideBody>
        </SideColumn>
      </AppArea>

      <Taskbar>
        <WeatherArea>
          <WeatherGlyph>
            <WeatherIcon />
            <WeatherBadge>3</WeatherBadge>
          </WeatherGlyph>
          <WeatherText>
            94°F
            <WeatherNote>Mostly sunny</WeatherNote>
          </WeatherText>
        </WeatherArea>
        <WindowsLogo />
        <SearchPill>
          <Search size={21} color="#222" strokeWidth={2.2} />
          Search
          <Lanterns />
        </SearchPill>
        <TaskSlots>
          <TaskSlot>
            <TaskViewIcon />
          </TaskSlot>
          <TaskSlot $open>
            <PhoneIcon />
          </TaskSlot>
          <TaskSlot $active>
            <ChromeLogo />
          </TaskSlot>
          <TaskSlot>
            <VncTile>
              <VncEye />
              VNC
              <VncStripe />
            </VncTile>
          </TaskSlot>
          <TaskSlot $open>
            <FolderIcon />
          </TaskSlot>
          <TaskSlot>
            <EdgeIcon />
          </TaskSlot>
          <TaskSlot $open>
            <TeamsIcon />
            <TeamsBadge>9+</TeamsBadge>
          </TaskSlot>
          <TaskSlot $open>
            <PhotosIcon />
          </TaskSlot>
          <TaskSlot $open>
            <NotepadIcon />
          </TaskSlot>
        </TaskSlots>
        <Tray>
          <ChevronUp size={20} />
          <TrayLang>
            ENG
            <br />
            IN
          </TrayLang>
          <TrayIcons>
            <Wifi size={20} />
            <Volume1 size={20} />
            <BatteryIcon />
          </TrayIcons>
          <Clock>
            4:58 PM
            <br />
            2/28/2025
          </Clock>
        </Tray>
      </Taskbar>
    </Page>
  );
}
